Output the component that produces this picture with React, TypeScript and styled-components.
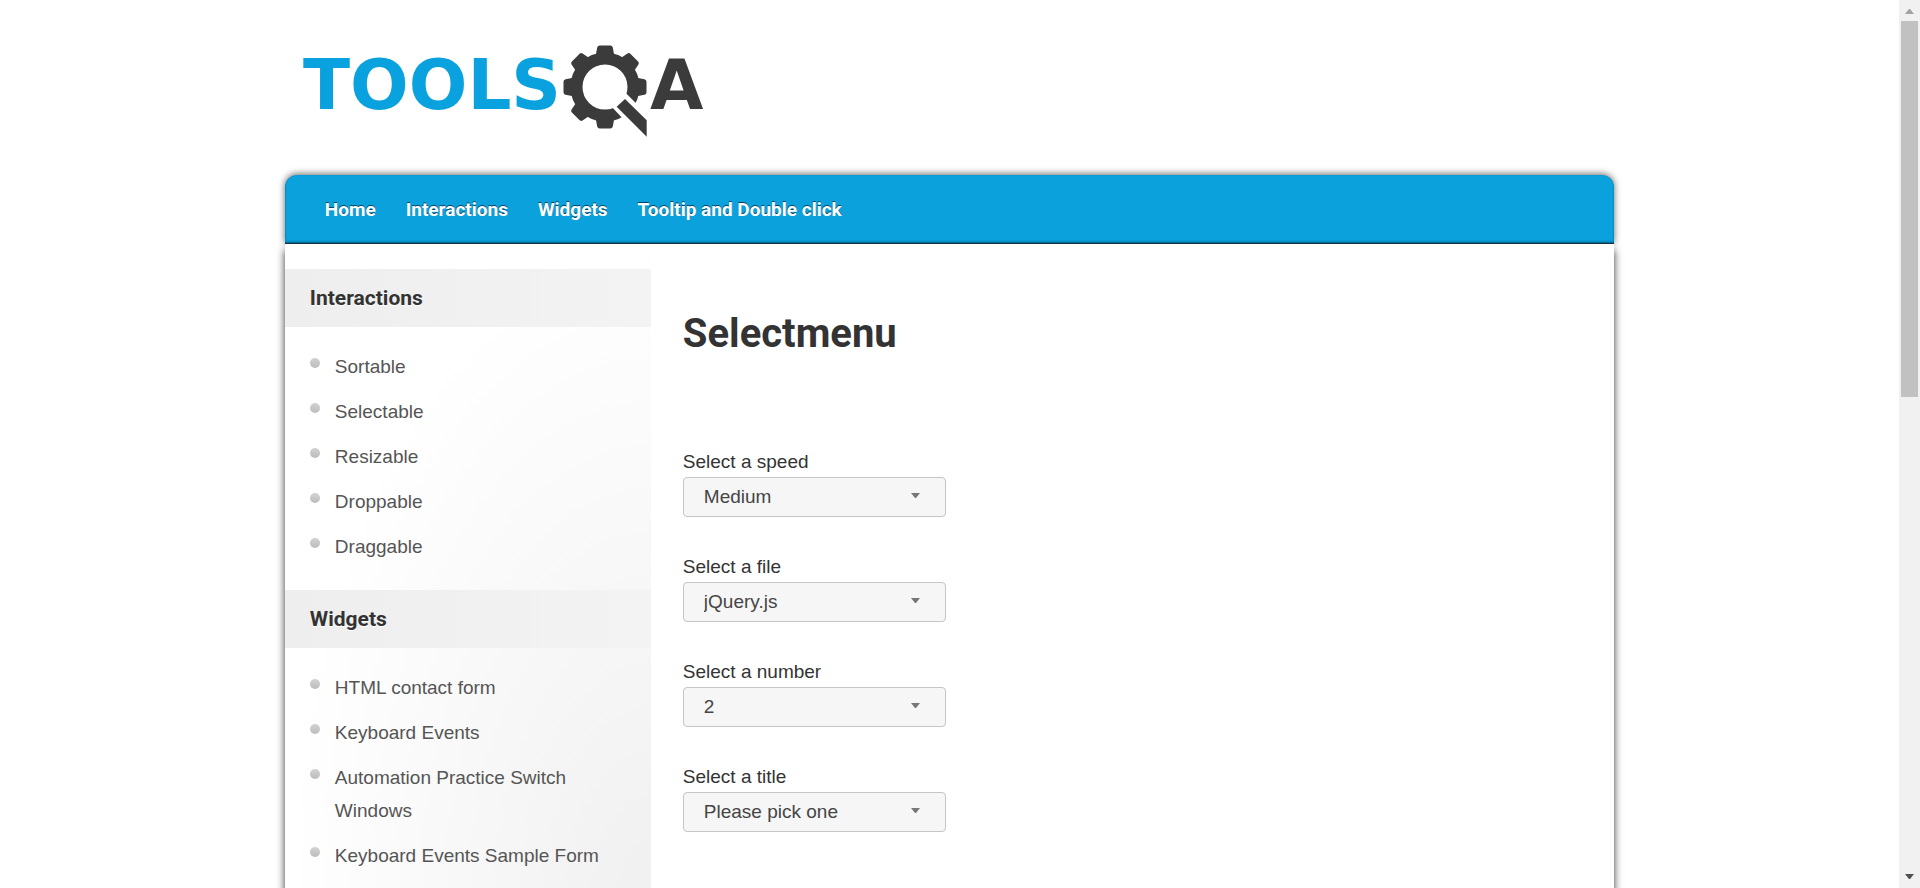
import React, { useId } from "react";
import styled, { createGlobalStyle } from "styled-components";

const GlobalStyle = createGlobalStyle`
  *, *::before, *::after { box-sizing: border-box; }
  body {
    margin: 0;
    background: #fff;
    color: #333;
    font: 19px/33px "Liberation Sans", Arial, sans-serif;
  }
  a { color: inherit; text-decoration: none; }
`;

const headingFont = `Roboto, "Noto Sans", sans-serif`;

const Viewport = styled.div`
  display: flex;
  height: 100vh;
  overflow: hidden;
`;

const Page = styled.div`
  flex: 1;
  min-width: 0;
`;

const Container = styled.div`
  width: 70%;
  margin: 0 auto;
`;

const Header = styled.header`
  height: 175px;
  padding: 30px 0 0 16px;
`;

const LogoLink = styled.a`
  display: inline-block;
`;

const LogoText = styled.text`
  font: 700 69px "DejaVu Sans", "Liberation Sans", sans-serif;
`;

const NavBar = styled.nav`
  display: flex;
  align-items: center;
  gap: 30px;
  height: 69px;
  padding: 1px 40px 0;
  background: #0aa1dd;
  border-radius: 12px 12px 0 0;
  border-bottom: 1px solid #17343f;
  box-shadow: 0 -1px 7px rgba(0, 0, 0, 0.6), inset 0 -1px 2px rgba(0, 0, 0, 0.4);
`;

const NavLink = styled.a`
  color: #fff;
  font: 700 19px/24px ${headingFont};
  text-shadow: 0 -1px 0 #03425c;
`;

const Body = styled.div`
  position: relative;
  display: flex;
  align-items: stretch;
  background: #fff;
  box-shadow: 0 6px 8px rgba(0, 0, 0, 0.8);
`;

const Sidebar = styled.aside`
  flex: 0 0 366px;
  padding-top: 25px;
  background: radial-gradient(ellipse 100% 100% at 100% 100%, #f0f0f0, #fff);
`;

const SideHeading = styled.h3`
  margin: 0;
  padding: 0 25px;
  background: linear-gradient(90deg, #eee, #f3f3f3);
  color: #333;
  font: 700 21px/58px ${headingFont};
  text-shadow: 0 1px 0 #fff;
`;

const SideList = styled.ul`
  display: flex;
  flex-direction: column;
  gap: 12px;
  margin: 0;
  padding: 23px 25px 27px;
  list-style: none;
`;

const SideItem = styled.li`
  display: flex;
  gap: 15px;
  color: #555;

  &::before {
    content: "";
    flex: 0 0 10px;
    height: 10px;
    margin-top: 8px;
    border-radius: 50%;
    background: linear-gradient(#d2d2d2, #bcbcbc);
  }
`;

const Main = styled.main`
  flex: 1;
  padding: 57px 32px 40px;
`;

const Title = styled.h1`
  margin: 0 0 80px;
  color: #333;
  font: 700 40px/66px ${headingFont};
`;

const Form = styled.form`
  display: flex;
  flex-direction: column;
  gap: 35px;
`;

const Label = styled.label`
  display: block;
  line-height: 30px;
`;

const SelectBox = styled.div`
  position: relative;
  width: 263px;
`;

const Select = styled.select`
  display: block;
  width: 100%;
  height: 40px;
  padding: 0 40px 2px 20px;
  border: 1px solid #c5c5c5;
  border-radius: 4px;
  background: #f6f6f6;
  color: #454545;
  font: 19px "Liberation Sans", Arial, sans-serif;
  appearance: none;
`;

const Caret = styled.svg`
  position: absolute;
  top: 16px;
  right: 26px;
  pointer-events: none;
`;

const ScrollTrack = styled.div`
  display: flex;
  flex: 0 0 21px;
  flex-direction: column;
  align-items: center;
  background: #f1f1f1;
`;

const ScrollArrow = styled.svg<{ $end?: boolean }>`
  flex: 0 0 21px;
  ${(p) => p.$end && "margin-top: auto;"}
`;

const ScrollThumb = styled.div`
  width: 17px;
  height: 376px;
  background: #c1c1c1;
`;

const toothAngles = [0, 90, 135, 180, 225, 270, 315];

function Logo() {
  return (
    <svg width="410" height="115" viewBox="0 0 410 115" role="img" aria-label="TOOLSQA">
      <LogoText x="2" y="79" fill="#09a2de">TOOLS</LogoText>
      <circle cx="304" cy="57" r="28.5" fill="none" stroke="#3b3b3b" strokeWidth="12" />
      {toothAngles.map((a) => (
        <path
          key={a}
          transform={`rotate(${a} 304 57)`}
          d="M332 45l5 3 6.500 1.200q2 .5 2 2.500v10.600q0 2-2 2.500l-6.500 1.200-5 3z"
          fill="#3b3b3b"
        />
      ))}
      <path d="M322 60.300l28 28v30l-42-44.300z" fill="#fff" />
      <path d="M324 69l21.700 21.300v16.400l-30-30z" fill="#3b3b3b" />
      <LogoText x="349" y="79" fill="#3b3b3b">A</LogoText>
    </svg>
  );
}

function SelectField({ label, options, value }: { label: string; options: string[]; value: string }) {
  const id = useId();
  return (
    <div>
      <Label htmlFor={id}>{label}</Label>
      <SelectBox>
        <Select id={id} defaultValue={value}>
          {options.map((o) => (
            <option key={o}>{o}</option>
          ))}
        </Select>
        <Caret width="9" height="6" viewBox="0 0 9 6" aria-hidden="true">
          <path d="M0 0h9L5 5H4z" fill="#777" />
        </Caret>
      </SelectBox>
    </div>
  );
}

const navLinks = ["Home", "Interactions", "Widgets", "Tooltip and Double click"];

const sections = [
  { title: "Interactions", items: ["Sortable", "Selectable", "Resizable", "Droppable", "Draggable"] },
  {
    title: "Widgets",
    items: [
      "HTML contact form",
      "Keyboard Events",
      "Automation Practice Switch Windows",
      "Keyboard Events Sample Form",
    ],
  },
];

const fields = [
  { label: "Select a speed", value: "Medium", options: ["Slower", "Slow", "Medium", "Fast", "Faster"] },
  { label: "Select a file", value: "jQuery.js", options: ["jQuery.js", "ui.jQuery.js"] },
  { label: "Select a number", value: "2", options: ["1", "2", "3", "4"] },
  { label: "Select a title", value: "Please pick one", options: ["Please pick one", "Mr.", "Mrs.", "Dr."] },
];

export default function App() {
  return (
    <>
      <GlobalStyle />
      <Viewport>
        <Page>
          <Container>
            <Header>
              <LogoLink href="#">
                <Logo />
              </LogoLink>
            </Header>
            <NavBar>
              {navLinks.map((n) => (
                <NavLink key={n} href="#">{n}</NavLink>
              ))}
            </NavBar>
            <Body>
              <Sidebar>
                {sections.map((s) => (
                  <section key={s.title}>
                    <SideHeading>{s.title}</SideHeading>
                    <SideList>
                      {s.items.map((i) => (
                        <SideItem key={i}>
                          <a href="#">{i}</a>
                        </SideItem>
                      ))}
                    </SideList>
                  </section>
                ))}
              </Sidebar>
              <Main>
                <Title>Selectmenu</Title>
                <Form>
                  {fields.map((f) => (
                    <SelectField key={f.label} {...f} />
                  ))}
                </Form>
              </Main>
            </Body>
          </Container>
        </Page>
        <ScrollTrack aria-hidden="true">
          <ScrollArrow width="21" height="21" viewBox="0 0 21 21">
            <path d="M6 14h9L11 9h-1z" fill="#a3a3a3" />
          </ScrollArrow>
          <ScrollThumb />
          <ScrollArrow $end width="21" height="21" viewBox="0 0 21 21">
            <path d="M6 7h9l-4 5h-1z" fill="#505050" />
          </ScrollArrow>
        </ScrollTrack>
      </Viewport>
    </>
  );
}
